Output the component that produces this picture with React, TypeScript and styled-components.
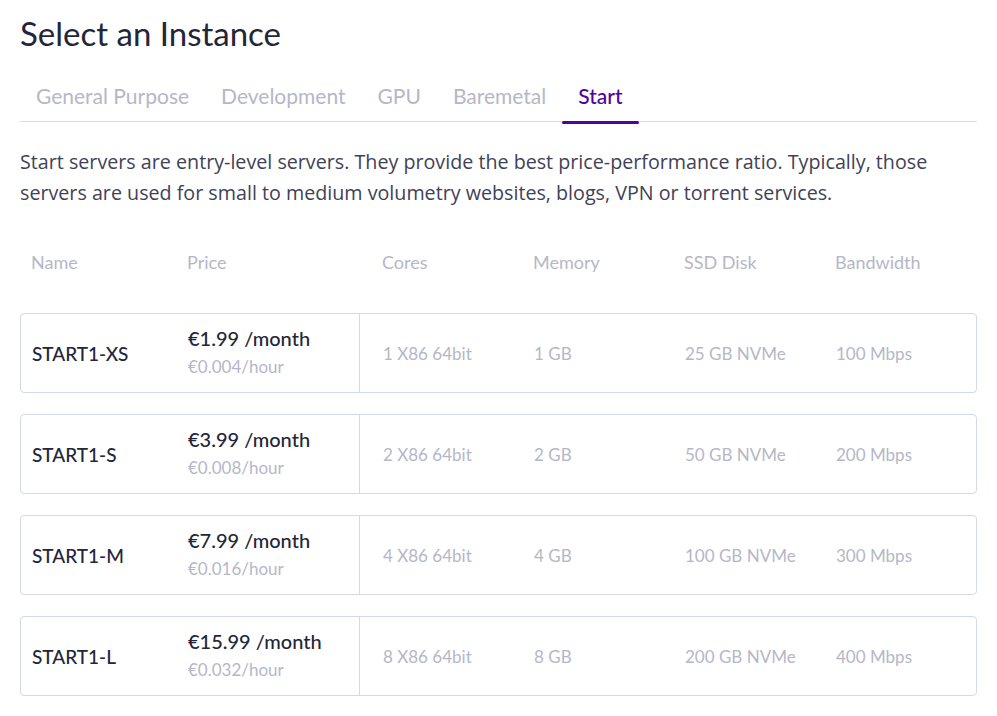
import React from "react";
import styled, { createGlobalStyle } from "styled-components";

const Global = createGlobalStyle`
  html, body { margin: 0; padding: 0; background: #ffffff; }
  body { font-family: Lato, "Noto Sans", sans-serif; -webkit-font-smoothing: antialiased; }
  * { box-sizing: border-box; }
`;

const Page = styled.div`
  padding: 12px 20px 20px 20px;
  width: 997px;
`;

const Title = styled.h1`
  margin: 0;
  font-size: 33px;
  font-weight: 400;
  line-height: 42px;
  color: #222638;
`;

const Tabs = styled.div`
  display: flex;
  margin-top: 28px;
  border-bottom: 1px solid #d9dbe6;
`;

const Tab = styled.div<{ $active?: boolean }>`
  padding: 0 16px 12px 16px;
  font-size: 21px;
  line-height: 27px;
  color: ${(p) => (p.$active ? "#4f0599" : "#b5b7c8")};
  font-weight: ${(p) => (p.$active ? 500 : 400)};
  position: relative;
  &::after {
    content: "";
    display: ${(p) => (p.$active ? "block" : "none")};
    position: absolute;
    left: 0;
    right: 0;
    bottom: -3px;
    height: 3px;
    border-radius: 2px;
    background: #4f0599;
  }
`;

const Description = styled.p`
  margin: 24px 0 0 0;
  font-family: "Open Sans", Lato, sans-serif;
  font-size: 19.7px;
  line-height: 31px;
  color: #3f4257;
`;

const columns = "156px 172px 151px 151px 151px 1fr";

const HeaderRow = styled.div`
  display: grid;
  grid-template-columns: ${columns};
  margin-top: 42px;
  padding-left: 11px;
  font-size: 18px;
  line-height: 24px;
  color: #b5b7c8;
`;

const HeaderCell = styled.div<{ $spec?: boolean }>`
  padding-left: ${(p) => (p.$spec ? "23px" : "0")};
`;

const List = styled.div`
  display: flex;
  flex-direction: column;
  gap: 21px;
  margin-top: 39px;
`;

const Card = styled.div`
  display: grid;
  grid-template-columns: ${columns};
  height: 80px;
  border: 1px solid #d4d8e8;
  border-radius: 4px;
  padding-left: 11px;
  align-items: center;
`;

const Name = styled.div`
  font-size: 19px;
  font-weight: 500;
  color: #222638;
`;

const PriceCell = styled.div`
  display: flex;
  flex-direction: column;
  height: 100%;
  justify-content: center;
  padding-bottom: 2px;
  border-right: 1px solid #d4d8e8;
`;

const Monthly = styled.div`
  font-size: 20px;
  line-height: 26px;
  font-weight: 500;
  color: #222638;
`;

const Hourly = styled.div`
  font-size: 17px;
  line-height: 24px;
  margin-top: 4px;
  color: #b5b7c8;
`;

const Spec = styled.div`
  padding-left: 23px;
  font-size: 17px;
  color: #b5b7c8;
`;

const offers = [
  { name: "START1-XS", month: "€1.99 /month", hour: "€0.004/hour", cores: "1 X86 64bit", mem: "1 GB", disk: "25 GB NVMe", bw: "100 Mbps" },
  { name: "START1-S", month: "€3.99 /month", hour: "€0.008/hour", cores: "2 X86 64bit", mem: "2 GB", disk: "50 GB NVMe", bw: "200 Mbps" },
  { name: "START1-M", month: "€7.99 /month", hour: "€0.016/hour", cores: "4 X86 64bit", mem: "4 GB", disk: "100 GB NVMe", bw: "300 Mbps" },
  { name: "START1-L", month: "€15.99 /month", hour: "€0.032/hour", cores: "8 X86 64bit", mem: "8 GB", disk: "200 GB NVMe", bw: "400 Mbps" },
];

export default function App() {
  return (
    <Page>
      <Global />
      <Title>Select an Instance</Title>
      <Tabs>
        <Tab>General Purpose</Tab>
        <Tab>Development</Tab>
        <Tab>GPU</Tab>
        <Tab>Baremetal</Tab>
        <Tab $active>Start</Tab>
      </Tabs>
      <Description>
        Start servers are entry-level servers. They provide the best price-performance ratio. Typically, those
        <br />
        servers are used for small to medium volumetry websites, blogs, VPN or torrent services.
      </Description>
      <HeaderRow>
        <HeaderCell>Name</HeaderCell>
        <HeaderCell>Price</HeaderCell>
        <HeaderCell $spec>Cores</HeaderCell>
        <HeaderCell $spec>Memory</HeaderCell>
        <HeaderCell $spec>SSD Disk</HeaderCell>
        <HeaderCell $spec>Bandwidth</HeaderCell>
      </HeaderRow>
      <List>
        {offers.map((o) => (
          <Card key={o.name}>
            <Name>{o.name}</Name>
            <PriceCell>
              <Monthly>{o.month}</Monthly>
              <Hourly>{o.hour}</Hourly>
            </PriceCell>
            <Spec>{o.cores}</Spec>
            <Spec>{o.mem}</Spec>
            <Spec>{o.disk}</Spec>
            <Spec>{o.bw}</Spec>
          </Card>
        ))}
      </List>
    </Page>
  );
}
